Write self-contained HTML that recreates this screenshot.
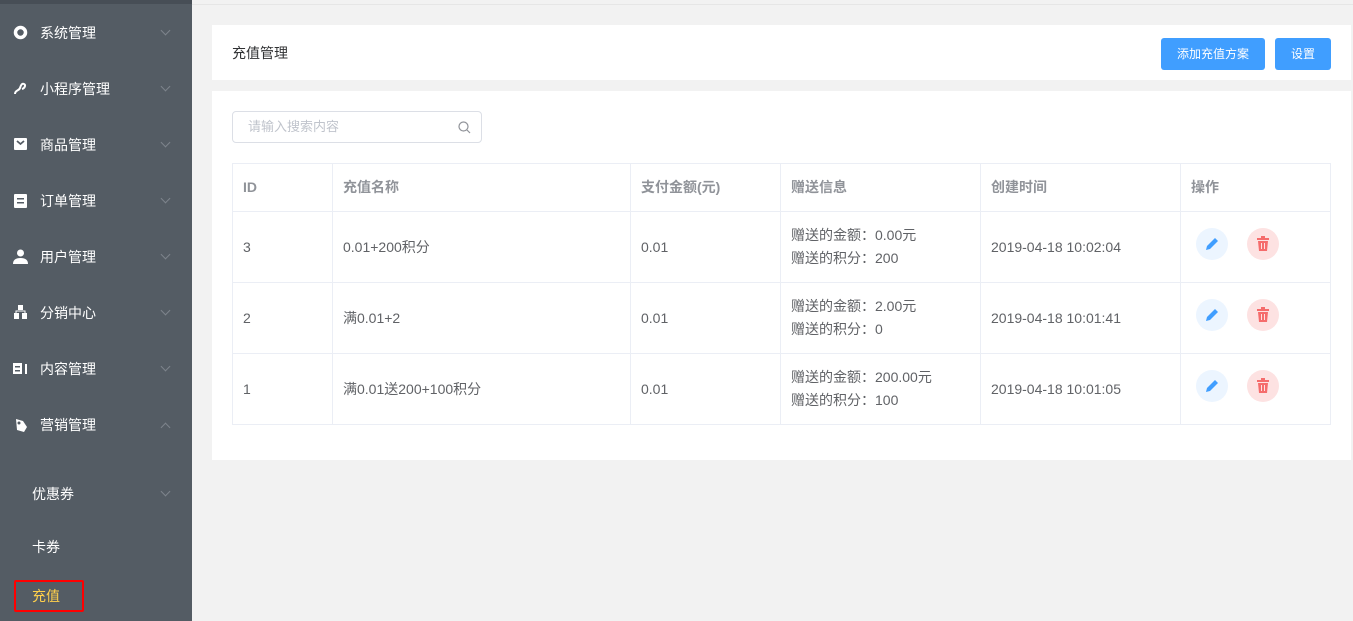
<!DOCTYPE html>
<html><head><meta charset="utf-8"><style>
*{box-sizing:border-box;margin:0;padding:0}
body{width:1353px;height:621px;overflow:hidden;background:#f2f2f2;font-family:"Liberation Sans","Noto Sans CJK SC",sans-serif;font-size:14px;color:#606266;position:relative}
.side{position:absolute;left:0;top:0;width:192px;height:621px;background:#545c64}
.side .top{height:4px;background:#474e56}
.mi{position:absolute;left:0;width:192px;height:56px;color:#fff;font-size:14px;line-height:56px}
.mi .ic{position:absolute;left:13px;top:20px;width:15px;height:15px}
.mi .t{position:absolute;left:40px}
.mi .ar{position:absolute;left:162px;top:22px;width:7px;height:7px;border-right:1px solid #7d848c;border-bottom:1px solid #7d848c;transform:rotate(45deg)}
.mi .up{transform:rotate(-135deg);top:27px}
.card{position:absolute;background:#fff}
.btn{position:absolute;top:38px;height:32px;background:#409eff;color:#fff;border-radius:3px;font-size:12px;line-height:32px;text-align:center}
table{position:absolute;left:232px;top:163px;width:1099px;border-collapse:collapse}
td,th{border:1px solid #ebeef5;text-align:left;padding:0 10px;font-size:14px;color:#606266;font-weight:normal;line-height:23px}
th{height:48px;color:#909399;font-weight:bold}
td{height:71px}
</style></head><body>
<div style="position:absolute;left:192px;top:0;width:1161px;height:5px;border-bottom:1px solid #e6e6e6;background:#f2f2f2"></div>
<div class="side"><div class="top"></div>
<div class="mi" style="top:5px"><svg class="ic" viewBox="0 0 15 15"><circle cx="7.5" cy="7.5" r="5" fill="none" stroke="#fff" stroke-width="3.5"/></svg><span class="t">系统管理</span><i class="ar"></i></div>
<div class="mi" style="top:61px"><svg class="ic" viewBox="0 0 15 15"><path d="M2 13 C2 9 6 10 7 7 S9 2 11 3 S12 7 9 8" fill="none" stroke="#fff" stroke-width="2"/></svg><span class="t">小程序管理</span><i class="ar"></i></div>
<div class="mi" style="top:117px"><svg class="ic" viewBox="0 0 15 15"><rect x="1" y="1" width="13" height="12" rx="1" fill="#fff"/><path d="M4 4 L7.5 7 L11 4" stroke="#545c64" stroke-width="1.8" fill="none"/></svg><span class="t">商品管理</span><i class="ar"></i></div>
<div class="mi" style="top:173px"><svg class="ic" viewBox="0 0 15 15"><rect x="1" y="1" width="13" height="14" rx="1" fill="#fff"/><rect x="4" y="5" width="7" height="1.5" fill="#545c64"/><rect x="4" y="9" width="7" height="1.5" fill="#545c64"/></svg><span class="t">订单管理</span><i class="ar"></i></div>
<div class="mi" style="top:229px"><svg class="ic" viewBox="0 0 15 15"><circle cx="7.5" cy="4" r="3.5" fill="#fff"/><path d="M0 15 Q0 9 7.5 9 Q15 9 15 15Z" fill="#fff"/></svg><span class="t">用户管理</span><i class="ar"></i></div>
<div class="mi" style="top:285px"><svg class="ic" viewBox="0 0 15 15"><rect x="5" y="0" width="5" height="5" fill="#fff"/><rect x="1" y="8" width="5" height="6" fill="#fff"/><rect x="9" y="8" width="5" height="6" fill="#fff"/><path d="M3 8V6h9v2" stroke="#fff" fill="none"/></svg><span class="t">分销中心</span><i class="ar"></i></div>
<div class="mi" style="top:341px"><svg class="ic" viewBox="0 0 15 15"><rect x="0" y="2" width="9" height="11" fill="#fff"/><rect x="2" y="5" width="5" height="1.5" fill="#545c64"/><rect x="2" y="9" width="5" height="1.5" fill="#545c64"/><rect x="12" y="3" width="2" height="10" fill="#fff"/></svg><span class="t">内容管理</span><i class="ar"></i></div>
<div class="mi" style="top:397px"><svg class="ic" viewBox="0 0 15 15"><path d="M3 2 L10 4 L14 10 L11 15 L4 13 Z" fill="#fff"/><circle cx="6" cy="6" r="1.5" fill="#545c64"/></svg><span class="t">营销管理</span><i class="ar up"></i></div>
<div class="mi" style="top:466px"><span class="t" style="left:32px">优惠券</span><i class="ar"></i></div>
<div class="mi" style="top:519px"><span class="t" style="left:32px">卡券</span></div>
<div style="position:absolute;left:14px;top:580px;width:70px;height:32px;border:2px solid #f00;border-radius:2px;color:#ffd04b;line-height:28px;padding-left:16px">充值</div>
</div>
<div class="card" style="left:212px;top:25px;width:1139px;height:55px"><span style="position:absolute;left:20px;top:18px;font-size:14px;color:#303133">充值管理</span></div>
<div class="btn" style="left:1161px;width:104px">添加充值方案</div>
<div class="btn" style="left:1275px;width:56px">设置</div>
<div class="card" style="left:212px;top:91px;width:1139px;height:369px"></div>
<div style="position:absolute;left:232px;top:111px;width:250px;height:32px;border:1px solid #dcdfe6;border-radius:4px;background:#fff;font-size:13px;color:#c0c4cc;line-height:30px;padding-left:15px">请输入搜索内容
<svg style="position:absolute;right:10px;top:9px" width="13" height="13" viewBox="0 0 13 13"><circle cx="5.5" cy="5.5" r="4.5" fill="none" stroke="#909399" stroke-width="1.2"/><path d="M9 9L12 12" stroke="#909399" stroke-width="1.2"/></svg></div>
<table>
<tr><th style="width:100px">ID</th><th style="width:298px">充值名称</th><th style="width:150px">支付金额(元)</th><th style="width:200px">赠送信息</th><th style="width:200px">创建时间</th><th>操作</th></tr>
<tr><td>3</td><td>0.01+200积分</td><td>0.01</td><td>赠送的金额：0.00元<br>赠送的积分：200</td><td>2019-04-18 10:02:04</td><td></td></tr>
<tr><td>2</td><td>满0.01+2</td><td>0.01</td><td>赠送的金额：2.00元<br>赠送的积分：0</td><td>2019-04-18 10:01:41</td><td></td></tr>
<tr><td>1</td><td>满0.01送200+100积分</td><td>0.01</td><td>赠送的金额：200.00元<br>赠送的积分：100</td><td>2019-04-18 10:01:05</td><td></td></tr>
</table>
<div id="o"></div>
<script>
var h='';[228,299,370].forEach(function(y){h+='<div style="position:absolute;left:1196px;top:'+y+'px;width:32px;height:32px;border-radius:50%;background:#ecf5ff"><svg width="32" height="32" viewBox="0 0 32 32"><path d="M10 22 L11 18 L19 10 L22 13 L14 21 Z" fill="#409eff"/></svg></div><div style="position:absolute;left:1247px;top:'+y+'px;width:32px;height:32px;border-radius:50%;background:#fde2e2"><svg width="32" height="32" viewBox="0 0 32 32"><rect x="10" y="10" width="12" height="2" fill="#f56c6c"/><rect x="14" y="8" width="4" height="2" fill="#f56c6c"/><path d="M11 13h10l-1 10h-8z" fill="#f56c6c"/><path d="M14.5 15v6M17.5 15v6" stroke="#fde2e2"/></svg></div>';});document.getElementById('o').innerHTML=h;
</script>
</body></html>
